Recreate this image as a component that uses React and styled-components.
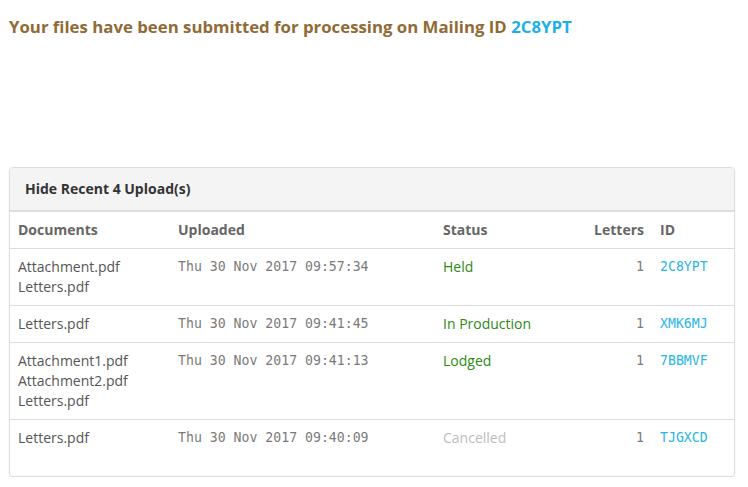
import React from "react";
import styled, { createGlobalStyle } from "styled-components";

const Global = createGlobalStyle`
  body { margin: 0; background: #fff; font-family: "Open Sans", "Noto Sans", sans-serif; }
`;

const Page = styled.div`
  padding: 15px 9px 0 9px;
  width: 726px;
`;

const Title = styled.h3`
  margin: 0;
  font-size: 16.8px;
  line-height: 24px;
  font-weight: 700;
  color: #8f6b35;
`;

const Mailing = styled.span`
  color: #1cb1e6;
`;

const Panel = styled.div`
  margin-top: 128px;
  border: 1px solid #dcdcdc;
  border-radius: 4px;
  box-shadow: 0 1px 2px rgba(0,0,0,0.06);
  overflow: hidden;
`;

const PanelHeader = styled.div`
  background: #f4f4f4;
  border-bottom: 2px solid #dedede;
  padding: 11px 15px 11px 15px;
  font-size: 14px;
  line-height: 20px;
  font-weight: 700;
  color: #333;
`;

const Table = styled.table`
  width: 100%;
  table-layout: fixed;
  border-collapse: collapse;
  margin-bottom: 20px;
  font-size: 14px;
  color: #555;
`;

const Th = styled.th`
  text-align: ${(p) => (p.$right ? "right" : "left")};
  font-weight: 700;
  color: #666;
  padding: 8px 8px;
  line-height: 20px;
  border-bottom: 1px solid #ddd;
  width: ${(p) => p.$w || "auto"};
`;

const Td = styled.td`
  vertical-align: top;
  padding: 8px 8px;
  line-height: 20px;
  height: 20px;
  white-space: nowrap;
  text-align: ${(p) => (p.$right ? "right" : "left")};
  font-family: ${(p) => (p.$mono ? '"DejaVu Sans Mono", "Liberation Mono", monospace' : "inherit")};
  font-size: ${(p) => (p.$mono ? "13.2px" : "14px")};
  color: ${(p) => p.$color || "#555"};
`;

const Tr = styled.tr`
  & + & > td { border-top: 1px solid #ddd; }
`;

const Status = styled.span`
  color: ${(p) => (p.$cancelled ? "#bdbdbd" : "#2c8a12")};
`;

const rows = [
  { docs: ["Attachment.pdf", "Letters.pdf"], date: "Thu 30 Nov 2017 09:57:34", status: "Held", id: "2C8YPT" },
  { docs: ["Letters.pdf"], date: "Thu 30 Nov 2017 09:41:45", status: "In Production", id: "XMK6MJ" },
  { docs: ["Attachment1.pdf", "Attachment2.pdf", "Letters.pdf"], date: "Thu 30 Nov 2017 09:41:13", status: "Lodged", id: "7BBMVF" },
  { docs: ["Letters.pdf"], date: "Thu 30 Nov 2017 09:40:09", status: "Cancelled", id: "TJGXCD", cancelled: true },
];

export default function App() {
  return (
    <>
      <Global />
      <Page>
        <Title>
          Your files have been submitted for processing on Mailing ID <Mailing>2C8YPT</Mailing>
        </Title>
        <Panel>
          <PanelHeader>Hide Recent 4 Upload(s)</PanelHeader>
          <Table>
            <thead>
              <tr>
                <Th $w="144px">Documents</Th>
                <Th $w="249px">Uploaded</Th>
                <Th>Status</Th>
                <Th $right $w="68px">Letters</Th>
                <Th $w="66px">ID</Th>
              </tr>
            </thead>
            <tbody>
              {rows.map((r) => (
                <Tr key={r.id}>
                  <Td>
                    {r.docs.map((d) => (
                      <div key={d}>{d}</div>
                    ))}
                  </Td>
                  <Td $mono $color="#7a7a7a">{r.date}</Td>
                  <Td><Status $cancelled={r.cancelled}>{r.status}</Status></Td>
                  <Td $mono $right $color="#7a7a7a">1</Td>
                  <Td $mono $color="#2ab4e8">{r.id}</Td>
                </Tr>
              ))}
            </tbody>
          </Table>
        </Panel>
      </Page>
    </>
  );
}
